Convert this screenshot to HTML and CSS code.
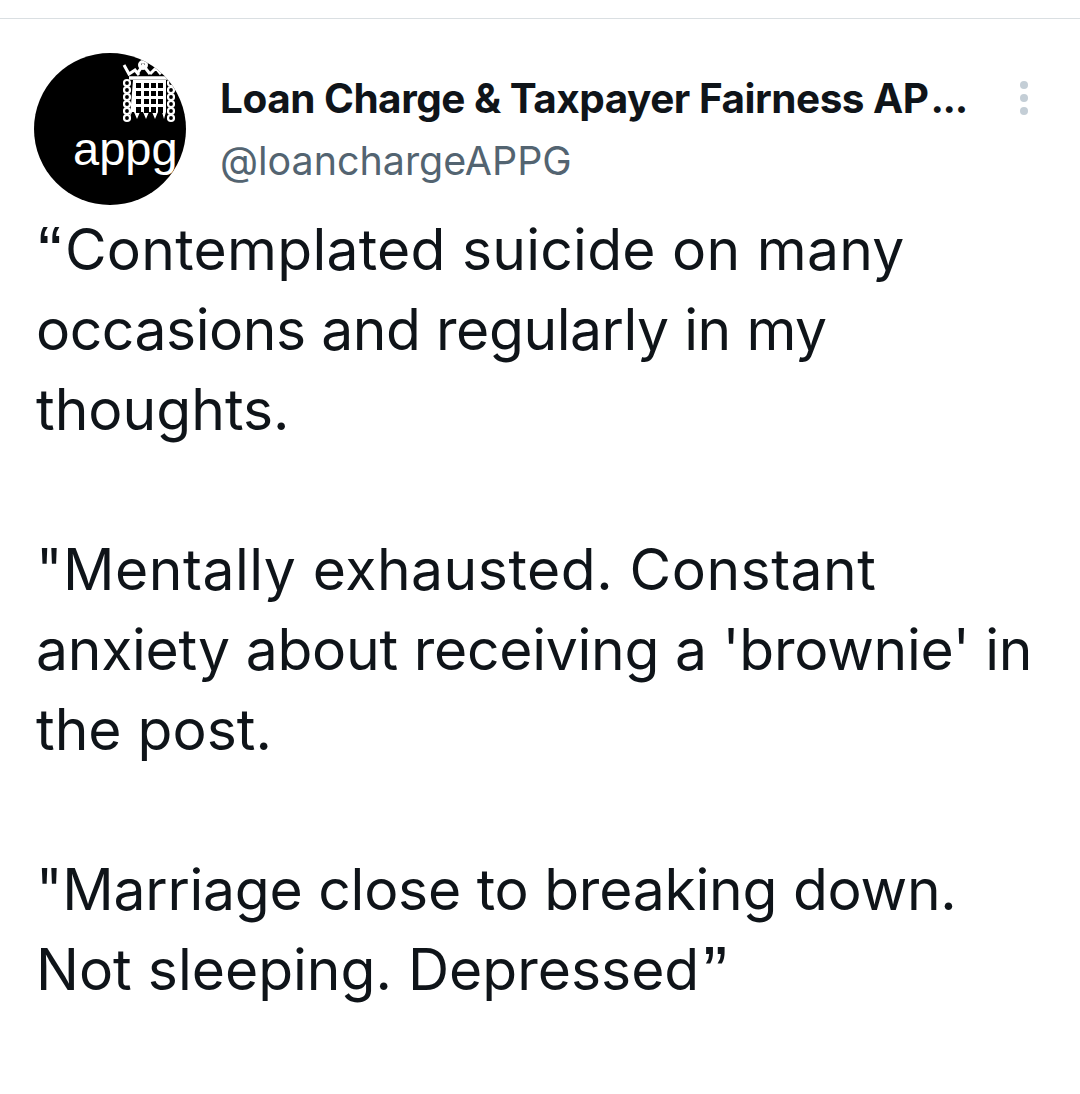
FILE: index.html
```html
<!DOCTYPE html>
<html lang="en">
<head>
<meta charset="utf-8">
<title>Tweet</title>
<link rel="stylesheet" href="styles.css">
</head>
<body>
<main class="tweet">
  <header class="head">
    <div class="avatar">
      <svg class="crest" viewBox="0 0 152 152" aria-hidden="true">
        <g fill="none" stroke="#fff" stroke-width="3">
          <path d="M90 12l5 9 6-4 4 5M103 21q6-9 6-9t7 9M116 21l6-6 4 5 6-6"/>
          <circle cx="109" cy="12" r="3.500"/>
          <path d="M95 25h40" stroke-width="3.500"/>
          <g stroke-width="2.200">
            <circle cx="93" cy="30" r="3"/><circle cx="93" cy="37" r="3"/><circle cx="93" cy="44" r="3"/><circle cx="93" cy="51" r="3"/><circle cx="93" cy="58" r="3"/><circle cx="93" cy="65" r="3"/>
            <circle cx="137" cy="30" r="3"/><circle cx="137" cy="37" r="3"/><circle cx="137" cy="44" r="3"/><circle cx="137" cy="51" r="3"/><circle cx="137" cy="58" r="3"/><circle cx="137" cy="65" r="3"/>
          </g>
        </g>
        <path fill="#fff" d="M99 27h33v32l-2 7-2-7h-4l-3 7-3-7h-3l-3 7-3-7h-3l-3 7-3-7h-2l-2 5z"/>
        <g fill="#000">
          <rect x="102" y="30" width="5" height="5"/><rect x="110" y="30" width="5" height="5"/><rect x="117" y="30" width="5" height="5"/><rect x="124" y="30" width="5" height="5"/>
          <rect x="102" y="38" width="5" height="5"/><rect x="110" y="38" width="5" height="5"/><rect x="117" y="38" width="5" height="5"/><rect x="124" y="38" width="5" height="5"/>
          <rect x="102" y="46" width="5" height="5"/><rect x="110" y="46" width="5" height="5"/><rect x="117" y="46" width="5" height="5"/><rect x="124" y="46" width="5" height="5"/>
          <rect x="102" y="54" width="5" height="6"/><rect x="110" y="54" width="5" height="6"/><rect x="117" y="54" width="5" height="6"/><rect x="124" y="54" width="5" height="6"/>
        </g>
      </svg>
      <span class="appg">appg</span>
    </div>
    <div class="who">
      <div class="name">Loan Charge &amp; Taxpayer Fairness AP<span class="dots">...</span></div>
      <div class="handle">@loanchargeAPPG</div>
    </div>
    <div class="more" aria-hidden="true"><i></i><i></i><i></i></div>
  </header>
  <div class="body">
    <p><span class="q q-open">“</span><span class="wide">Contemplated suicide on many</span><br><span class="tighter">occasions and regularly in my</span><br>thoughts.</p>
    <p><span class="wider">"Mentally exhausted. Constant</span><br><span class="tight">anxiety about receiving a 'brownie' in</span><br>the post.</p>
    <p><span class="tight">"Marriage close to breaking down.</span><br>Not sleeping. Depressed<span class="q q-close">”</span></p>
  </div>
</main>
</body>
</html>
```
FILE: styles.css
```css
* { box-sizing: border-box; }
html, body { margin: 0; height: 100%; background: #fff; }
body { font-family: Inter, "Liberation Sans", Arial, sans-serif; color: #0f1419; }
.tweet { height: 1094px; padding-top: 18px; overflow: hidden; }
.head {
  display: flex;
  align-items: flex-start;
  border-top: 1px solid #dadfe2;
  padding: 34px 52px 0 34px;
}
.avatar {
  position: relative;
  flex: 0 0 152px;
  width: 152px;
  height: 152px;
  border-radius: 50%;
  background: #000;
  overflow: hidden;
  font-family: "Liberation Sans", Arial, sans-serif;
}
.crest { position: absolute; inset: 0; width: 152px; height: 152px; }
.appg {
  position: absolute;
  left: 39px;
  top: 69px;
  font-size: 47px;
  line-height: 54px;
  color: #fff;
}
.who { flex: 1; min-width: 0; padding: 21px 0 0 34px; }
.name { font-size: 40.5px; line-height: 50px; font-weight: 700; letter-spacing: -0.5px; white-space: nowrap; }
.dots { letter-spacing: -1.5px; margin-left: 2px; }
.handle { margin-top: 12px; font-size: 39.4px; line-height: 50px; color: #536471; }
.more { display: flex; flex-direction: column; gap: 5px; padding-top: 28px; }
.more i { display: block; width: 8px; height: 8px; border-radius: 50%; background: #c4ced6; }
.body { padding: 5px 36px 0; font-size: 57px; line-height: 80px; }
.body p { margin: 0 0 80px; white-space: nowrap; }
.q { font-family: "Liberation Sans", Arial, sans-serif; font-size: 72px; line-height: 0; vertical-align: -7px; }
.q-open { margin: 0 3px 0 2px; }
.q-close { margin-left: 4px; }
.wide { letter-spacing: 0.25px; }
.wider { letter-spacing: 0.5px; }
.tight { letter-spacing: -0.25px; }
.tighter { letter-spacing: -0.45px; }
```
